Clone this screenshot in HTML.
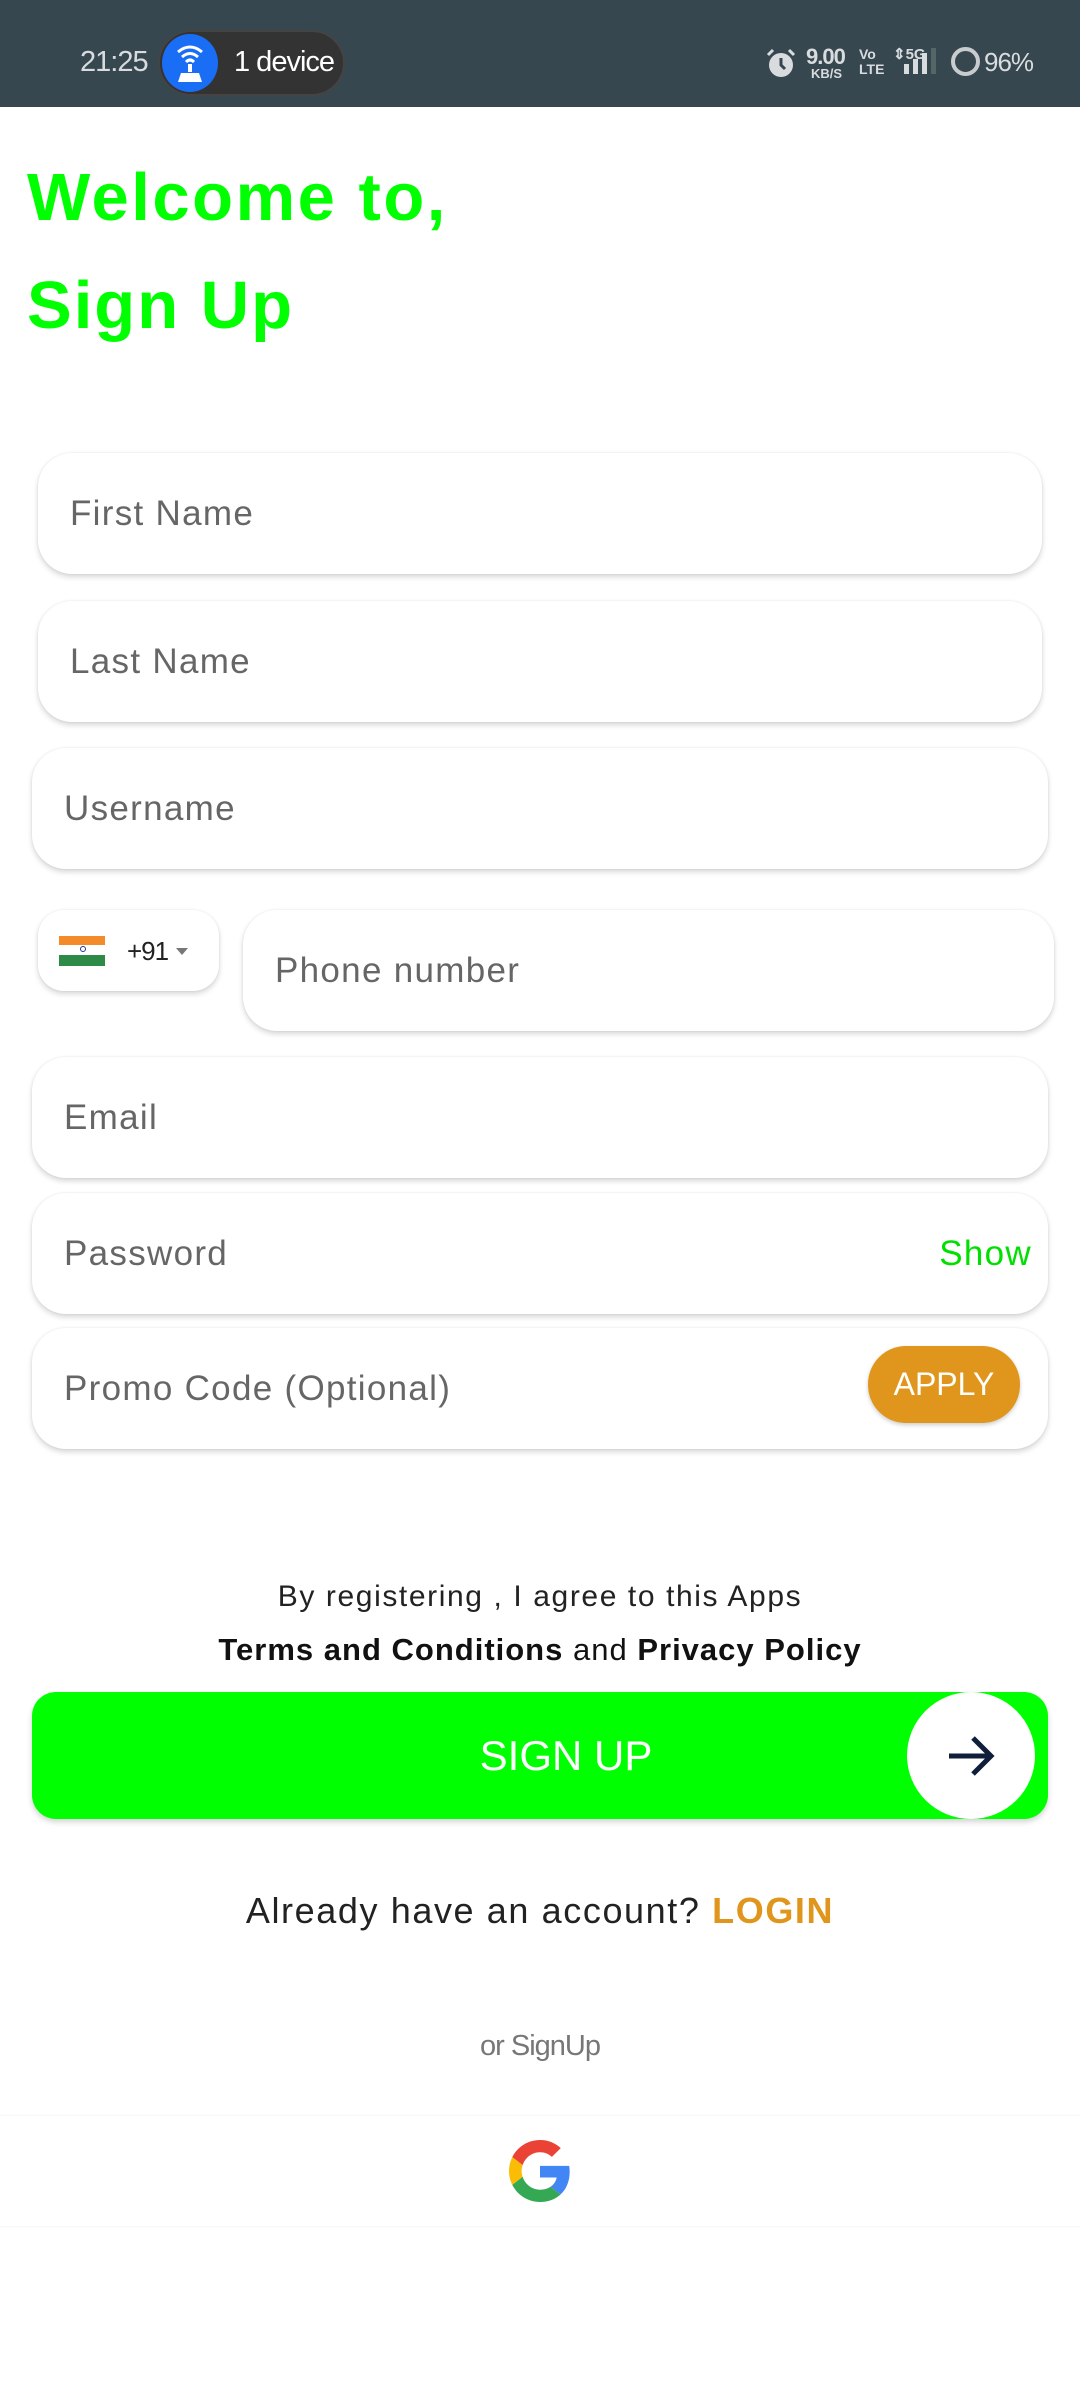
<!DOCTYPE html>
<html><head><meta charset="utf-8"><style>
*{margin:0;padding:0;box-sizing:border-box}
body{width:1080px;height:2400px;background:#fff;font-family:"Liberation Sans",sans-serif;position:relative;overflow:hidden}
.abs{position:absolute}
.sb{left:0;top:0;width:1080px;height:107px;background:#37474f;color:#d8dcde}
.field{position:absolute;background:#fff;border-radius:34px;box-shadow:0 3px 6px rgba(0,0,0,.16),0 0 2px rgba(0,0,0,.08)}
.ph{position:absolute;font-size:35px;color:#666;top:50%;transform:translateY(-50%);letter-spacing:1.3px}
</style></head><body>
<div class="abs sb">
  <div class="abs" style="left:80px;top:46px;font-size:29px;letter-spacing:-1px">21:25</div>
  <div class="abs" style="left:158px;top:30px;width:187px;height:66px;border-radius:33px;background:#333;border:2px solid #444"></div>
  <div class="abs" style="left:162px;top:34px;width:56px;height:58px;border-radius:50%;background:#1a6ef5"></div>
  <svg class="abs" style="left:170px;top:40px" width="40" height="46" viewBox="0 0 40 46"><path d="M8 12 Q20 2 32 12 M12 17 Q20 10 28 17 M16 22 Q20 18 24 22" stroke="#fff" stroke-width="3" fill="none"/><rect x="18" y="24" width="4" height="8" fill="#fff"/><path d="M8 42 L11 33 H29 L32 42 Z" fill="#fff"/></svg>
  <div class="abs" style="left:234px;top:46px;font-size:29px;color:#fff;letter-spacing:-1px">1 device</div>
  <svg class="abs" style="left:766px;top:47px" width="30" height="32" viewBox="0 0 30 32"><circle cx="15" cy="18" r="12" fill="#d8dcde"/><path d="M15 11 V18 L19 22" stroke="#37474f" stroke-width="3" fill="none"/><path d="M2 8 L7 3 M28 8 L23 3" stroke="#d8dcde" stroke-width="3"/></svg>
  <div class="abs" style="left:806px;top:44px;font-size:22px;font-weight:bold;letter-spacing:-1px">9.00</div>
  <div class="abs" style="left:811px;top:66px;font-size:13px;font-weight:bold">KB/S</div>
  <div class="abs" style="left:859px;top:47px;font-size:14px;font-weight:bold;line-height:15px">Vo<br>LTE</div>
  <div class="abs" style="left:893px;top:45px;font-size:15px;font-weight:bold">⇕5G</div>
  <div class="abs" style="left:904px;top:64px;width:5px;height:10px;background:#d8dcde"></div>
  <div class="abs" style="left:913px;top:59px;width:5px;height:15px;background:#d8dcde"></div>
  <div class="abs" style="left:922px;top:53px;width:5px;height:21px;background:#d8dcde"></div>
  <div class="abs" style="left:931px;top:48px;width:5px;height:26px;background:#566"></div>
  <div class="abs" style="left:951px;top:47px;width:29px;height:29px;border-radius:50%;border:4px solid #c8cccf"></div>
  <div class="abs" style="left:984px;top:47px;font-size:26px;letter-spacing:-1px">96%</div>
</div>

<div class="abs" style="left:27px;top:158px;font-size:67px;font-weight:bold;color:#00ff00;line-height:80px;letter-spacing:2.5px">Welcome to,</div>
<div class="abs" style="left:27px;top:266px;font-size:67px;font-weight:bold;color:#00ff00;line-height:80px;letter-spacing:2px">Sign Up</div>

<div class="field" style="left:38px;top:453px;width:1004px;height:121px"><span class="ph" style="left:32px">First Name</span></div>
<div class="field" style="left:38px;top:601px;width:1004px;height:121px"><span class="ph" style="left:32px">Last Name</span></div>
<div class="field" style="left:32px;top:748px;width:1016px;height:121px"><span class="ph" style="left:32px">Username</span></div>

<div class="field" style="left:38px;top:910px;width:181px;height:81px;border-radius:26px">
  <div class="abs" style="left:21px;top:26px;width:46px;height:9px;background:#f38b2a"></div>
  <div class="abs" style="left:21px;top:35px;width:46px;height:10px;background:#fff"></div>
  <div class="abs" style="left:42px;top:36px;width:6px;height:6px;border-radius:50%;border:1px solid #24349a"></div>
  <div class="abs" style="left:21px;top:45px;width:46px;height:11px;background:#2e8b47"></div>
  <div class="abs" style="left:89px;top:26px;font-size:26px;color:#222;letter-spacing:-1px">+91</div>
  <div class="abs" style="left:138px;top:38px;border-left:6px solid transparent;border-right:6px solid transparent;border-top:7px solid #777"></div>
</div>
<div class="field" style="left:243px;top:910px;width:811px;height:121px"><span class="ph" style="left:32px">Phone number</span></div>

<div class="field" style="left:32px;top:1057px;width:1016px;height:121px"><span class="ph" style="left:32px">Email</span></div>
<div class="field" style="left:32px;top:1193px;width:1016px;height:121px"><span class="ph" style="left:32px">Password</span><span class="ph" style="right:16px;color:#00e000">Show</span></div>
<div class="field" style="left:32px;top:1328px;width:1016px;height:121px"><span class="ph" style="left:32px">Promo Code (Optional)</span>
  <div class="abs" style="left:836px;top:18px;width:152px;height:77px;border-radius:38px;background:#e0961c;box-shadow:0 2px 4px rgba(0,0,0,.2);color:#fff;font-size:32px;text-align:center;line-height:77px">APPLY</div>
</div>

<div class="abs" style="left:0;width:1080px;top:1580px;text-align:center;font-size:30px;color:#222;letter-spacing:1.6px">By registering , I agree to this Apps</div>
<div class="abs" style="left:0;width:1080px;top:1632px;text-align:center;font-size:31px;color:#111;letter-spacing:1px"><b>Terms and Conditions</b> and <b>Privacy Policy</b></div>

<div class="abs" style="left:32px;top:1692px;width:1016px;height:127px;border-radius:24px;background:#00ff00;box-shadow:0 3px 6px rgba(0,0,0,.18)">
  <div class="abs" style="left:0;top:0;line-height:127px;text-align:center;font-size:42px;color:#fff;width:1068px">SIGN UP</div>
  <div class="abs" style="left:875px;top:0;width:128px;height:127px;border-radius:50%;background:#fff"></div>
  <svg class="abs" style="left:913px;top:38px" width="52" height="52" viewBox="0 0 52 52"><path d="M4 26 H46 M28 8 L46 26 L28 44" stroke="#0f1f3a" stroke-width="5" fill="none"/></svg>
</div>

<div class="abs" style="left:0;width:1080px;top:1890px;text-align:center;font-size:36px;color:#222;letter-spacing:1.6px">Already have an account? <b style="color:#e0961c">LOGIN</b></div>
<div class="abs" style="left:0;width:1080px;top:2030px;text-align:center;font-size:29px;color:#777;letter-spacing:-1px">or SignUp</div>

<div class="abs" style="left:0;top:2116px;width:1080px;height:110px;background:#fff;box-shadow:0 0 2px rgba(0,0,0,.1)"></div>
<svg class="abs" style="left:509px;top:2140px" width="62" height="62" viewBox="0 0 48 48">
<path fill="#EA4335" d="M24 9.5c3.54 0 6.71 1.22 9.210 3.6l6.85-6.85C35.9 2.38 30.47 0 24 0 14.62 0 6.51 5.38 2.56 13.22l7.98 6.19C12.43 13.72 17.740 9.5 24 9.5z"/>
<path fill="#4285F4" d="M46.98 24.55c0-1.57-.15-3.09-.38-4.55H24v9.02h12.94c-.58 2.96-2.26 5.48-4.78 7.18l7.73 6c4.51-4.18 7.09-10.36 7.09-17.65z"/>
<path fill="#FBBC05" d="M10.53 28.59c-.48-1.45-.76-2.99-.76-4.59s.27-3.14.76-4.59l-7.98-6.19C.92 16.46 0 20.12 0 24c0 3.88.92 7.54 2.56 10.78l7.97-6.19z"/>
<path fill="#34A853" d="M24 48c6.48 0 11.930-2.13 15.89-5.81l-7.73-6c-2.15 1.45-4.92 2.3-8.16 2.3-6.26 0-11.57-4.22-13.47-9.910l-7.98 6.19C6.51 42.62 14.62 48 24 48z"/>
</svg>
</body></html>
